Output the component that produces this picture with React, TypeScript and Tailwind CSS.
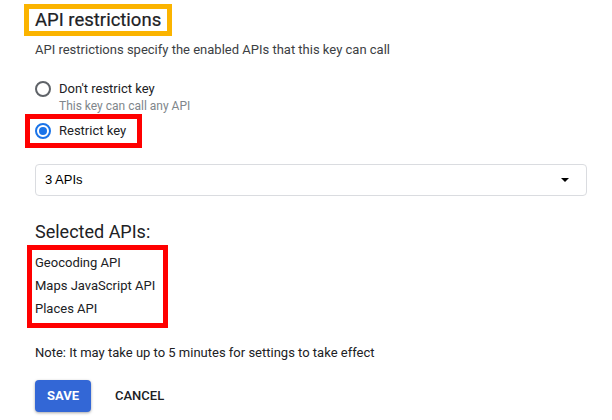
import { useState } from 'react'

const apis = ['Geocoding API', 'Maps JavaScript API', 'Places API']

function Radio({ checked }: { checked: boolean }) {
    return (
        <span className={`flex size-[16px] shrink-0 items-center justify-center rounded-full border-2 ${checked ? 'border-[#1a73e8]' : 'border-[#5f6368]'}`}>
            {checked && <span className="size-[8px] rounded-full bg-[#1a73e8]" />}
        </span>
    )
}

export default function App() {
    const [restricted, setRestricted] = useState(true)

    return (
        <div className="h-[420px] w-[612px] bg-white px-[35px] pt-[4px] text-[#202124] font-['Roboto',sans-serif]">
            <div className="-ml-[11px] inline-block border-[5px] border-[#fbb400] px-[6px] pr-[6px]">
                <h2 className="text-[18.5px] leading-[22px] [-webkit-text-stroke:0.2px_#202124]">API restrictions</h2>
            </div>
            <p className="mt-[5px] text-[13px] leading-[18px] text-[#3c4043]">API restrictions specify the enabled APIs that this key can call</p>

            <label className="mt-[21px] flex h-[18px] items-center gap-[8px] text-[13px]" onClick={() => setRestricted(false)}>
                <Radio checked={!restricted} />
                <span>Don't restrict key</span>
            </label>
            <p className="ml-[24px] mt-[2px] text-[12px] leading-[12px] text-[#80868b]">This key can call any API</p>

            <div className="-ml-[10px] mt-[2px] inline-flex border-[5px] border-[#ff0000] px-[5px] pr-[11px]">
                <label className="flex h-[24px] items-center gap-[8px] text-[13px]" onClick={() => setRestricted(true)}>
                    <Radio checked={restricted} />
                    <span>Restrict key</span>
                </label>
            </div>

            <div className="mt-[16px] flex h-[32px] w-[552px] items-center justify-between rounded-[4px] border border-[#dadce0] pl-[9px] pr-[17px] font-['Liberation_Sans',sans-serif] text-[13px] text-black">
                <span>3 APIs</span>
                <svg width="8" height="4" viewBox="0 0 8 4"><path d="M0 0h8L4 4z" fill="#000" /></svg>
            </div>

            <h3 className="mt-[25px] text-[18px] leading-[22px]">Selected APIs:</h3>
            <ul className="-ml-[8px] mt-[2px] inline-block border-[5px] border-[#ff0000] pb-[3px] pl-[3px] pr-[8px] pt-[1px] text-[13px] leading-[23px]">
                {apis.map((api) => (
                    <li key={api}>{api}</li>
                ))}
            </ul>

            <p className="mt-[16px] text-[13px] leading-[18px]">Note: It may take up to 5 minutes for settings to take effect</p>

            <div className="mt-[18px] flex items-center gap-[24px]">
                <button className="h-[32px] w-[56px] rounded-[4px] bg-[#3367d6] text-[13px] font-bold text-white shadow-[0_1px_3px_rgba(0,0,0,0.35)]">SAVE</button>
                <button className="text-[13px] font-medium">CANCEL</button>
            </div>
        </div>
    )
}
